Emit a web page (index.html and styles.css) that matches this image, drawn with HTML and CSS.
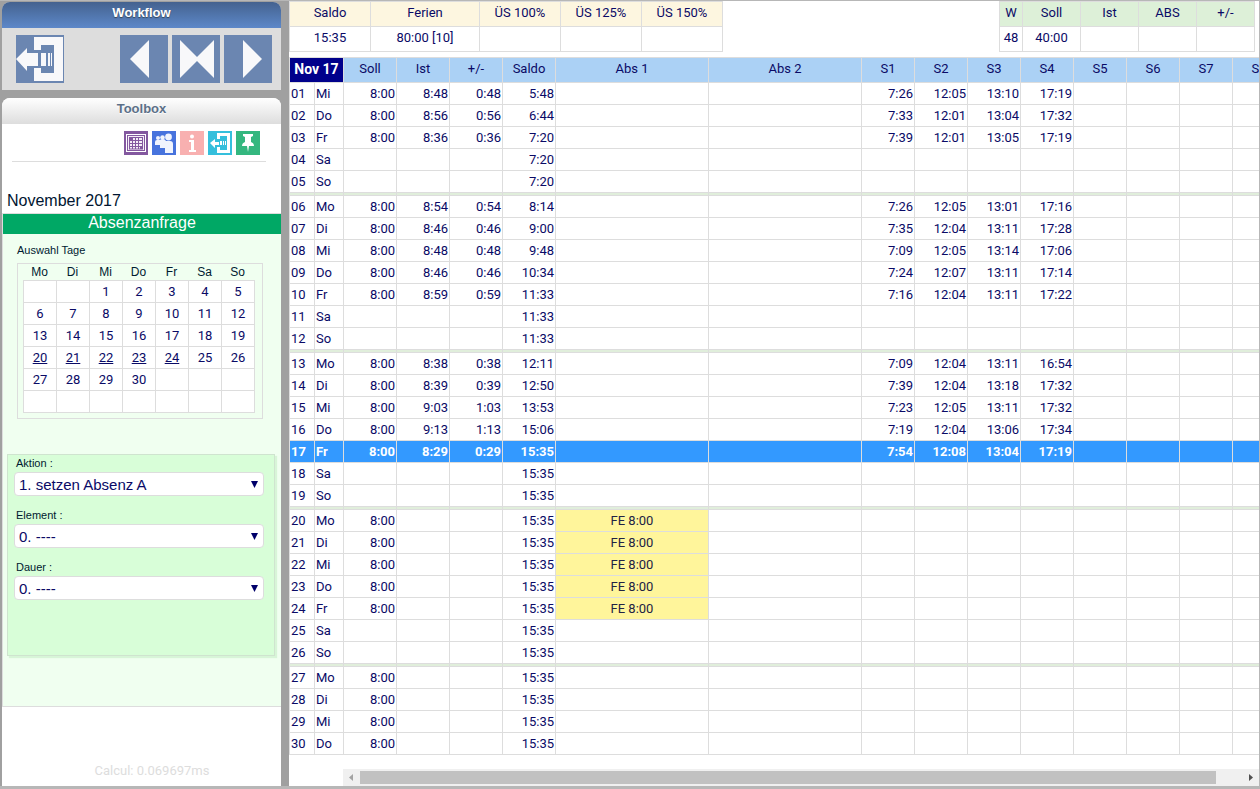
FILE: index.html
```html
<!DOCTYPE html>
<html lang="de">
<head>
<meta charset="utf-8">
<title>Workflow</title>
<link rel="stylesheet" href="styles.css">
</head>
<body>
<div class="app">
  <aside class="sidebar">
    <section class="workflow">
      <h1 class="bar bar-blue">Workflow</h1>
      <div class="nav">
        <button class="nav-btn nav-exit" type="button" aria-label="Abmelden"><svg viewBox="0 0 48 48"><path fill="#f8f8fa" d="M18 2h29v44H18V33h7v5h13V10H25v5h-7zM0 24L11 13v5h11v13H11v5zM25 18h5v13h-5zM32 18h2v13h-2zM35 18h1v13h-1z"/></svg></button>
        <button class="nav-btn" type="button" aria-label="Zurück"><svg viewBox="0 0 48 48"><path fill="#f8f8fa" d="M29 5v38L10 24z"/></svg></button>
        <button class="nav-btn" type="button" aria-label="Heute"><svg viewBox="0 0 48 48"><path fill="#f8f8fa" d="M8 5l17 17L42 5v38L25 26 8 43z"/></svg></button>
        <button class="nav-btn" type="button" aria-label="Weiter"><svg viewBox="0 0 48 48"><path fill="#f8f8fa" d="M19 5v38l19-19z"/></svg></button>
      </div>
    </section>
    <section class="toolbox">
      <h2 class="bar bar-light">Toolbox</h2>
      <div class="tools">
        <button class="tool violet" type="button" aria-label="Kalender"><svg viewBox="0 0 24 24"><path fill="#fff" d="M2 3h20v18H2z"/><path fill="#83589f" d="M3 4h18v16H3z"/><path fill="#f4eef7" d="M4 5h16v14H4z"/><path stroke="#83589f" fill="none" d="M5.500 6v12M8.500 6v12M11.500 6v12M14.500 6v12M18.500 6v12M5 6.500h14M5 9.500h14M5 12.500h14M5 15.500h14M5 18h14"/><path fill="#83589f" d="M5 6h3v3H5zM16 15h3v3h-3z"/></svg></button>
        <button class="tool blue" type="button" aria-label="Team"><svg viewBox="0 0 24 24"><g fill="#f0f4fd"><circle cx="6" cy="7" r="2"/><circle cx="10.500" cy="6.500" r="2.300"/><circle cx="16.500" cy="6" r="3.400"/><path d="M3 11q0-2 2-2h3q1-1 3-1 2 0 3 2h4q3 0 3 3v9h-8v-5H8v-3H3z"/></g></svg></button>
        <button class="tool pink" type="button" aria-label="Info"><svg viewBox="0 0 24 24"><circle cx="12" cy="5.500" r="2" fill="#fff"/><path fill="#fff" d="M9 9h5v10h2v2H9v-2h2v-8H9z"/></svg></button>
        <button class="tool cyan" type="button" aria-label="Absenz"><svg viewBox="0 0 24 24"><path fill="#fff" d="M9 2h13v20H9v-6h3v3h7V5h-7v3H9zM2 12l5-4v3h4v3H7v3zM12 10h2v4h-2zM15 10h1v4h-1zM17 10h1v4h-1z"/></svg></button>
        <button class="tool green" type="button" aria-label="Anheften"><svg viewBox="0 0 24 24"><path fill="#fff" d="M7 3h10v2l-2 1v5q3 1 3 4h-5l-1 6-1-6H6q0-3 3-4V6L7 5z"/></svg></button>
      </div>
      <p class="month">November 2017</p>
      <form class="request">
        <h3 class="request-title">Absenzanfrage</h3>
        <p class="small pick-label">Auswahl Tage</p>
        <div class="pick">
          <table class="days">
            <thead><tr><th>Mo</th><th>Di</th><th>Mi</th><th>Do</th><th>Fr</th><th>Sa</th><th>So</th></tr></thead>
            <tbody>
              <tr><td></td><td></td><td>1</td><td>2</td><td>3</td><td>4</td><td>5</td></tr>
              <tr><td>6</td><td>7</td><td>8</td><td>9</td><td>10</td><td>11</td><td>12</td></tr>
              <tr><td>13</td><td>14</td><td>15</td><td>16</td><td>17</td><td>18</td><td>19</td></tr>
              <tr><td><a href="#">20</a></td><td><a href="#">21</a></td><td><a href="#">22</a></td><td><a href="#">23</a></td><td><a href="#">24</a></td><td>25</td><td>26</td></tr>
              <tr><td>27</td><td>28</td><td>29</td><td>30</td><td></td><td></td><td></td></tr>
              <tr><td></td><td></td><td></td><td></td><td></td><td></td><td></td></tr>
            </tbody>
          </table>
        </div>
        <div class="fields">
          <div class="field"><label class="small" for="aktion">Aktion :</label><select id="aktion"><option>1. setzen Absenz A</option></select></div>
          <div class="field"><label class="small" for="element">Element :</label><select id="element"><option>0. ----</option></select></div>
          <div class="field"><label class="small" for="dauer">Dauer :</label><select id="dauer"><option>0. ----</option></select></div>
        </div>
      </form>
      <p class="timing">Calcul: 0.069697ms</p>
    </section>
  </aside>
  <main class="main">
    <div class="summaries">
      <table class="grid summary cream">
        <colgroup><col class="w81"><col class="w109"><col class="w81"><col class="w81"><col class="w81"></colgroup>
        <thead><tr><th>Saldo</th><th>Ferien</th><th>ÜS 100%</th><th>ÜS 125%</th><th>ÜS 150%</th></tr></thead>
        <tbody><tr><td>15:35</td><td>80:00 [10]</td><td></td><td></td><td></td></tr></tbody>
      </table>
      <table class="grid summary mint">
        <colgroup><col class="w23"><col class="w58"><col class="w58"><col class="w58"><col class="w58"></colgroup>
        <thead><tr><th>W</th><th>Soll</th><th>Ist</th><th>ABS</th><th>+/-</th></tr></thead>
        <tbody><tr><td>48</td><td>40:00</td><td></td><td></td><td></td></tr></tbody>
      </table>
    </div>
    <div class="sheet-view">
      <table class="grid sheet">
        <colgroup><col class="w25"><col class="w29"><col class="w53" span="4"><col class="w153" span="2"><col class="w53" span="8"></colgroup>
        <thead><tr><th class="current" colspan="2">Nov 17</th><th>Soll</th><th>Ist</th><th>+/-</th><th>Saldo</th><th>Abs 1</th><th>Abs 2</th><th>S1</th><th>S2</th><th>S3</th><th>S4</th><th>S5</th><th>S6</th><th>S7</th><th>S8</th></tr></thead>
        <tbody id="rows"></tbody>
      </table>
    </div>
    <div class="scrollbar" aria-hidden="true">
      <svg class="arrow" viewBox="0 0 17 17"><path fill="#a3a3a3" d="M10 5v7L6 8.500z"/></svg>
      <div class="track"><div class="thumb"></div></div>
      <svg class="arrow" viewBox="0 0 17 17"><path fill="#505050" d="M7 5v7l4-3.500z"/></svg>
    </div>
  </main>
</div>
<script src="sheet.js"></script>
</body>
</html>
```
FILE: styles.css
```css
* { box-sizing: border-box; }

body {
  margin: 0;
  font-family: Roboto, "Liberation Sans", Arial, sans-serif;
  font-size: 13px;
  color: #0a0a66;
}

h1, h2, h3, p { margin: 0; }

.app {
  display: flex;
  min-height: 100vh;
  border: solid #b7b7b7;
  border-width: 1px 1px 3px 0;
}

/* Sidebar */
.sidebar {
  flex: none;
  display: flex;
  flex-direction: column;
  gap: 8px;
  width: 289px;
  padding: 1px 8px 0 2px;
  background: #a0a0a0;
  font-family: "Liberation Sans", Arial, sans-serif;
}

.workflow { background: #ddd; border-radius: 8px 8px 0 0; }

.bar {
  height: 26px;
  border-radius: 8px 8px 0 0;
  font-size: 13px;
  line-height: 22px;
  text-align: center;
}
.bar-blue {
  background: linear-gradient(#44628f, #5d88c9);
  color: #fff;
  text-shadow: 0 1px 1px #345;
}
.bar-light {
  background: linear-gradient(#fff, #ddd);
  color: #5c7088;
  text-shadow: 0 1px 1px #fff;
}

.nav {
  display: flex;
  gap: 4px;
  padding: 7px 9px 7px 14px;
}
.nav-btn {
  width: 48px;
  height: 48px;
  padding: 0;
  border: 0;
  background: #6b86b1;
}
.nav-exit { margin-right: auto; }
.nav-btn svg, .tool svg { display: block; width: 100%; height: 100%; }

.toolbox {
  flex: 1;
  display: flex;
  flex-direction: column;
  background: #fff;
  border-radius: 8px 8px 0 0;
}
.tools {
  display: flex;
  justify-content: flex-end;
  gap: 4px;
  margin: 7px 15px 0 10px;
  padding: 0 6px 6px 0;
  border-bottom: 1px solid #ddd;
}
.tool { width: 24px; height: 24px; padding: 0; border: 0; }
.violet { background: #83589f; }
.blue { background: #4773dd; }
.pink { background: #f8b0b0; }
.cyan { background: #35bfdc; }
.green { background: #34b77f; }

.month {
  margin-top: 28px;
  padding-left: 5px;
  font-size: 16px;
  line-height: 22px;
  color: #001530;
}

.request {
  height: 494px;
  margin-top: 1px;
  border: solid #ddd;
  border-width: 1px 0 1px 1px;
  background: #f0fff0;
  color: #001a30;
}
.request-title {
  height: 20px;
  background: #00a865;
  color: #fff;
  font-size: 16px;
  font-weight: 400;
  line-height: 18px;
  text-align: center;
}
.small { font-size: 11px; line-height: 14px; }
.pick-label { padding: 9px 0 6px 14px; }

.pick {
  width: 246px;
  margin-left: 14px;
  padding: 0 5px 5px;
  border: 1px solid #ddd;
}
.days { border-collapse: collapse; table-layout: fixed; width: 232px; }
.days th { height: 16px; padding: 1px 1px 0 0; font-size: 12px; font-weight: 400; line-height: 15px; }
.days td {
  height: 22px;
  padding: 0;
  border: 1px solid #ddd;
  background: #fff;
  color: #0a0a66;
  font-family: Roboto, sans-serif;
  line-height: 20px;
  text-align: center;
}
.days a { color: inherit; }

.fields {
  display: flex;
  flex-direction: column;
  gap: 12px;
  width: 268px;
  height: 202px;
  margin: 35px 0 0 4px;
  padding: 1px 10px 0 6px;
  border: 1px solid #cfe4cf;
  background: #d8fed8;
  box-shadow: 2px 2px 1px #d8f5d8;
}
.field { display: flex; flex-direction: column; }
.field label { padding: 0 0 2px 2px; }
.field { height: 40px; }
.field select {
  appearance: none;
  height: 25px;
  padding: 0 4px;
  border: 1px solid #ddd;
  border-radius: 4px;
  background: #fff url("data:image/svg+xml,%3Csvg xmlns='http://www.w3.org/2000/svg' width='7' height='7'%3E%3Cpath fill='%2300006a' d='M0 0h7L3.500 7z'/%3E%3C/svg%3E") no-repeat right 5px top 8px;
  color: #0a0a66;
  font: 15px "Liberation Sans", Arial, sans-serif;
}

.timing {
  margin: auto 0 6px;
  padding-left: 21px;
  color: #ddd;
  font-family: Roboto, sans-serif;
  line-height: 18px;
  text-align: center;
}

/* Time sheet */
.main { flex: 1; min-width: 0; display: flex; flex-direction: column; background: #fff; }

.summaries { display: flex; justify-content: space-between; padding-right: 4px; }

.grid { border-collapse: collapse; table-layout: fixed; }
.grid th, .grid td { padding: 0; border: 1px solid #ddd; white-space: nowrap; }
.grid th, .summary td { height: 25px; padding-bottom: 2px; line-height: 22px; }
.grid th { font-weight: 400; }
.summary td { text-align: center; }
.summary { width: 434px; }
.mint { width: 256px; }
.cream th { background: #fdf6e0; }
.mint th { background: #ddf0d8; }

.w23 { width: 23px; }
.w25 { width: 25px; }
.w29 { width: 29px; }
.w53 { width: 53px; }
.w58 { width: 58px; }
.w81 { width: 81px; }
.w109 { width: 109px; }
.w153 { width: 153px; }

.sheet-view { margin-top: 5px; overflow: hidden; }
.sheet { width: 997px; }
.sheet th { background: #abd1f5; }
.sheet .current { background: #00008b; color: #fff; font-size: 14px; font-weight: 700; }
.sheet td { height: 22px; padding: 0 1px; line-height: 21px; text-align: right; }
.sheet .day { text-align: left; }
.sheet .abs { text-align: center; }
.sheet .leave { background: #fff59b; color: #222244; }
.sheet .today td { background: #3399ff; color: #fff; font-weight: 700; }
.sheet .week td { height: 3px; background: #e0eedb; line-height: 0; }

.scrollbar {
  display: flex;
  height: 17px;
  margin: auto 0 0 54px;
  background: #f0f0f0;
}
.arrow { flex: none; width: 17px; height: 17px; }
.track { flex: 1; padding: 2px 0; }
.thumb { width: 97%; height: 13px; background: #c1c1c1; }
```
FILE: sheet.js
```js
// day | weekday | Soll | Ist | +/- | Saldo | Abs 1 | S1 | S2 | S3 | S4; "-" starts a new week
const days = `01|Mi|8:00|8:48|0:48|5:48||7:26|12:05|13:10|17:19
02|Do|8:00|8:56|0:56|6:44||7:33|12:01|13:04|17:32
03|Fr|8:00|8:36|0:36|7:20||7:39|12:01|13:05|17:19
04|Sa||||7:20
05|So||||7:20
-
06|Mo|8:00|8:54|0:54|8:14||7:26|12:05|13:01|17:16
07|Di|8:00|8:46|0:46|9:00||7:35|12:04|13:11|17:28
08|Mi|8:00|8:48|0:48|9:48||7:09|12:05|13:14|17:06
09|Do|8:00|8:46|0:46|10:34||7:24|12:07|13:11|17:14
10|Fr|8:00|8:59|0:59|11:33||7:16|12:04|13:11|17:22
11|Sa||||11:33
12|So||||11:33
-
13|Mo|8:00|8:38|0:38|12:11||7:09|12:04|13:11|16:54
14|Di|8:00|8:39|0:39|12:50||7:39|12:04|13:18|17:32
15|Mi|8:00|9:03|1:03|13:53||7:23|12:05|13:11|17:32
16|Do|8:00|9:13|1:13|15:06||7:19|12:04|13:06|17:34
17|Fr|8:00|8:29|0:29|15:35||7:54|12:08|13:04|17:19
18|Sa||||15:35
19|So||||15:35
-
20|Mo|8:00|||15:35|FE 8:00
21|Di|8:00|||15:35|FE 8:00
22|Mi|8:00|||15:35|FE 8:00
23|Do|8:00|||15:35|FE 8:00
24|Fr|8:00|||15:35|FE 8:00
25|Sa||||15:35
26|So||||15:35
-
27|Mo|8:00|||15:35
28|Di|8:00|||15:35
29|Mi|8:00|||15:35
30|Do|8:00|||15:35`;

const body = document.getElementById("rows");
for (const line of days.split("\n")) {
  const row = body.insertRow();
  const v = line === "-" ? [] : line.split("|");
  if (line === "-") row.className = "week";
  if (v[0] === "17") row.className = "today";
  // Abs 2 has no entries this month, so the stamps move one column right.
  const values = [...v.slice(0, 7), ...Array(Math.max(0, 7 - v.length)).fill(""), "", ...v.slice(7)];
  for (let i = 0; i < 16; i++) {
    const cell = row.insertCell();
    cell.textContent = values[i] || "";
    if (i < 2) cell.className = "day";
    if (i === 6) cell.className = values[6] ? "abs leave" : "abs";
  }
}
```
